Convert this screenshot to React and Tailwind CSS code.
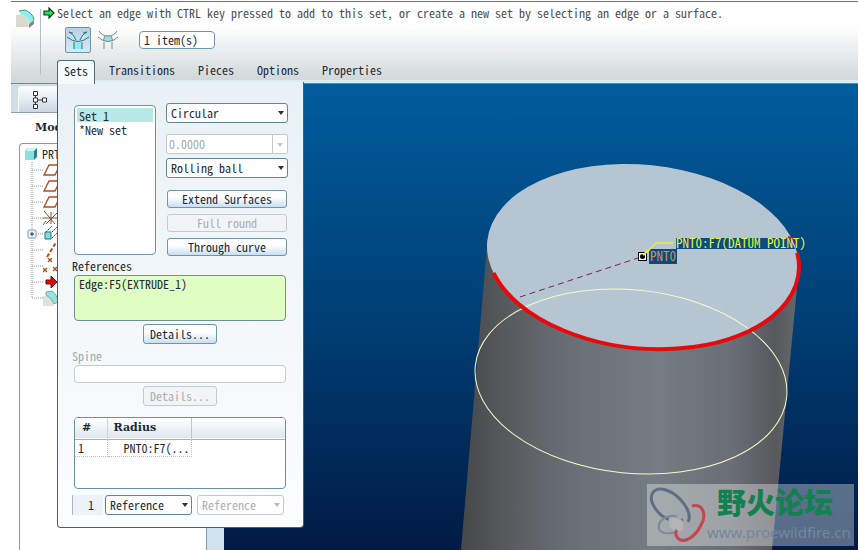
import React, { useState } from "react";

const TABS = ["Transitions", "Pieces", "Options", "Properties"];

const INK = "#1e2a33";

function RoundIcon({ className }) {
  return (
    <svg viewBox="0 0 20 20" className={className} aria-hidden="true">
      <path d="M1 6 L7 5 Q13 8 14 18 H1 Z" fill="#dad9d0" />
      <path d="M4 2 L10 1 Q18 4 19 11 L14 15 Q13 8 6 5 Z" fill="#8df0ea" />
      <path d="M4 2 L10 1 Q18 4 19 11" fill="none" stroke="#5c8288" strokeWidth="1" />
      <path d="M14 15 L19 11 V15 L14 19 Z" fill="#85877f" />
    </svg>
  );
}

function PromptArrow() {
  return (
    <svg viewBox="0 0 12 12" className="h-3 w-3 shrink-0" aria-hidden="true">
      <path d="M1 4 H6 V1 L11 6 L6 11 V8 H1 Z" fill="#1fe060" stroke="#0b3d1a" strokeWidth="1.2" />
    </svg>
  );
}

function SetModeIcon() {
  return (
    <svg viewBox="0 0 24 24" className="h-6 w-6 shrink-0" fill="none" aria-hidden="true">
      <path d="M8 14 Q12 15 16 14 V21 H8 Z" fill="#86eef2" />
      <path d="M2 9 L7 5 Q10 8 10 12 Q5 11 2 9 Z M22 9 L17 5 Q14 8 14 12 Q19 11 22 9 Z" fill="#a8f0f2" />
      <path d="M1 9 Q12 18 23 9 M3 4 Q8 6 10 12 M21 4 Q16 6 14 12 M8 14 V21 M16 14 V21" stroke="#4a6877" />
      <path d="M3 4 L7 5 M21 4 L17 5" stroke="#4a6877" />
    </svg>
  );
}

function TransitionModeIcon() {
  return (
    <svg viewBox="0 0 24 24" className="h-6 w-6 shrink-0" fill="none" aria-hidden="true">
      <path d="M9 8 Q12 6 15 8 L17 13 Q12 15 7 13 Z" fill="#8fe4e2" />
      <path d="M2 9 Q12 18 22 9 M3 3 Q6 8 12 8 Q18 8 21 3 M9 8 L7 13 M15 8 L17 13 M8 14 V21 M16 14 V21" stroke="#7f8b91" />
    </svg>
  );
}

function Header({ tab, setTab, children }) {
  return (
    <header className="relative z-10 flex h-[82px] border-b border-[#5f8ba3] bg-linear-to-b from-white from-30% to-[#d2d9da] to-95%">
      <div className="flex w-[30px] shrink-0 pt-[7px] pb-2">
        <div className="flex-1 border-r border-[#b4c0c6] pl-1">
          <RoundIcon className="h-5 w-5" />
        </div>
      </div>
      <div className="flex min-w-0 flex-1 flex-col justify-between">
        <p className="flex items-center gap-[2px] pt-1 pl-[2px] leading-[14px] whitespace-nowrap text-[#4a4f55]">
          <PromptArrow />
          Select an edge with CTRL key pressed to add to this set, or create a new set by selecting an edge or a surface.
        </p>
        <div className="flex items-center pl-6">
          <button type="button" aria-label="Set mode" className="flex h-[26px] w-[26px] items-center justify-center rounded-[2px] border border-[#6f93aa] bg-linear-to-b from-[#b4d2e6] to-[#d4e9f6]">
            <SetModeIcon />
          </button>
          <button type="button" aria-label="Transition mode" className="ml-1 flex h-[26px] w-[26px] items-center justify-center">
            <TransitionModeIcon />
          </button>
          <input
            aria-label="Collector"
            readOnly
            value="1 item(s)"
            className="ml-[18px] h-[18px] w-[76px] rounded-[4px] border border-[#7395a8] bg-white px-1"
          />
        </div>
        <nav className="flex h-[23px] pl-4">
          <button
            type="button"
            onClick={() => setTab("Sets")}
            className="relative z-20 h-6 w-[38px] rounded-t-[3px] border border-b-0 border-[#4f6b7b] bg-[#f7fafc] pb-1 leading-[18px]"
          >
            Sets
          </button>
          <div className="flex flex-1 gap-[23px] border-b-3 border-[#dcecf5] pl-[14px]">
            {TABS.map((name) => (
              <button key={name} type="button" onClick={() => setTab(name)}>
                {name}
              </button>
            ))}
          </div>
        </nav>
      </div>
      {tab === "Sets" && children}
    </header>
  );
}

function Caret({ className }) {
  return (
    <svg viewBox="0 0 6 4" className={`pointer-events-none absolute top-2 right-1 h-1 w-[6px] ${className}`} aria-hidden="true">
      <path d="M0 0 H6 L3 4 Z" fill="currentColor" />
    </svg>
  );
}

function Dropdown({ label, options, disabled, className }) {
  return (
    <div className={`relative ${className || ""}`}>
      <select
        aria-label={label}
        disabled={disabled}
        className="h-5 w-full appearance-none rounded-[3px] border border-[#5f8799] bg-white px-1 leading-4 disabled:border-[#c3cacd] disabled:text-[#aab0b3] disabled:opacity-100"
      >
        {options.map((o) => (
          <option key={o}>{o}</option>
        ))}
      </select>
      <Caret className={disabled ? "text-[#b5babd]" : "text-[#2a3137]"} />
    </div>
  );
}

function PanelButton({ children, disabled, className }) {
  return (
    <button
      type="button"
      disabled={disabled}
      className={`rounded-[3px] border border-[#6f95ab] bg-linear-to-b from-white from-40% to-[#c6e0f3] disabled:border-[#c3cbcf] disabled:from-[#f1f5f7] disabled:to-[#f1f5f7] disabled:text-[#a9afb2] ${className}`}
    >
      {children}
    </button>
  );
}

function SetsPanel() {
  return (
    <section
      aria-label="Sets"
      className="absolute top-20 left-[46px] w-[247px] rounded-b-[4px] border border-t-0 border-[#47616f] bg-linear-to-b from-[#eaf1f6] to-[#fbfdfe] pt-[21px] pb-3 pl-4"
    >
      <div className="flex gap-[10px]">
        <select
          size={9}
          aria-label="Round sets"
          defaultValue="Set 1"
          className="mt-[2px] h-[150px] w-[82px] overflow-hidden rounded-[4px] border border-[#6d95a4] bg-white p-[2px] leading-3"
        >
          <option className="flex h-[14px] min-h-0 items-center px-[2px] py-0 leading-3 checked:bg-[linear-gradient(#b9e9e7,#b9e9e7)] checked:text-[#1e2a33]">Set 1</option>
          <option className="flex h-[14px] min-h-0 items-center px-[2px] py-0 leading-3">*New set</option>
        </select>
        <div className="flex w-[122px] flex-col">
          <Dropdown label="Cross section" options={["Circular", "Conic"]} />
          <div className="relative mt-[11px] flex h-5 rounded-[2px] border border-[#c3cacd] bg-white">
            <input aria-label="Conic parameter" disabled defaultValue="0.0000" className="w-[106px] border-r border-[#c3cacd] px-[2px] text-[#a3a9ac]" />
            <Caret className="text-[#c5c9cb]" />
          </div>
          <Dropdown label="Creation method" options={["Rolling ball", "Normal to spine"]} className="mt-1" />
          <div className="mt-3 flex flex-col gap-[6px] px-px">
            <PanelButton className="h-[18px] leading-4">Extend Surfaces</PanelButton>
            <PanelButton disabled className="h-[18px] leading-4">Full round</PanelButton>
            <PanelButton className="h-[18px] leading-4">Through curve</PanelButton>
          </div>
        </div>
      </div>

      <div className="mt-1 flex w-[212px] flex-col">
        <label htmlFor="references" className="-ml-[2px] pb-[3px] leading-3">References</label>
        <textarea
          id="references"
          readOnly
          value="Edge:F5(EXTRUDE_1)"
          className="h-[46px] resize-none rounded-[4px] border border-[#6f9290] bg-[#e0fdc3] px-1 py-px leading-[14px]"
        />
        <PanelButton className="mt-[3px] h-5 w-[74px] self-center leading-4">Details...</PanelButton>
        <label htmlFor="spine" className="mt-[6px] -ml-[2px] pb-[3px] leading-3 text-[#a3a9ac]">Spine</label>
        <input id="spine" disabled className="h-[18px] rounded-[4px] border border-[#c3cbcf] bg-white px-1" />
        <PanelButton disabled className="mt-[3px] h-5 w-[74px] self-center leading-4">Details...</PanelButton>

        <div className="mt-[11px] h-[72px] overflow-hidden rounded-[4px] border border-[#6d909f] bg-white">
          <table className="w-full table-fixed border-collapse text-left">
            <thead>
              <tr className="h-[21px] border-b border-[#9fb2bf] bg-linear-to-b from-white to-[#dfe7ef] font-['DejaVu_Serif',serif] text-[11px]">
                <th className="w-8 border-r border-[#cbd5dc] pl-[7px]">#</th>
                <th className="w-[84px] border-r border-[#b9c8d2] pl-[6px]">Radius</th>
                <th aria-label="Value" />
              </tr>
            </thead>
            <tbody>
              <tr className="h-[17px]">
                <td className="border-r border-b border-dotted border-[#b9c3ca] pl-[3px] leading-4">1</td>
                <td className="border-r border-b border-dotted border-[#b9c3ca] pl-4 leading-4 whitespace-nowrap">PNT0:F7(...</td>
                <td />
              </tr>
            </tbody>
          </table>
        </div>

        <div className="mt-[6px] -ml-[2px] flex">
          <span className="mr-[2px] w-[31px] border-l border-[#a9b8c1] bg-[#edf2f6] pr-[9px] text-right leading-5">1</span>
          <Dropdown label="Radius type" options={["Reference", "Value"]} className="w-[87px]" />
          <Dropdown label="Second radius type" options={["Reference", "Value"]} disabled className="ml-[5px] w-[87px]" />
        </div>
      </div>
    </section>
  );
}

const brown = "#a5532a";

const TREE = [
  { name: "RIGHT", icon: <path d="M6 3 H17 L12 13 H1 Z" fill="none" stroke={brown} strokeWidth="1.4" /> },
  { name: "TOP", icon: <path d="M6 3 H17 L12 13 H1 Z" fill="none" stroke={brown} strokeWidth="1.4" /> },
  { name: "FRONT", icon: <path d="M6 3 H17 L12 13 H1 Z" fill="none" stroke={brown} strokeWidth="1.4" /> },
  { name: "PRT_CSYS_DEF", icon: <path d="M0 8 H16 M3 14 L14 3 M1 1 L12 14 M8 2 V14 M0 15 L3 11" fill="none" stroke="#80503a" /> },
  {
    name: "Extrude 1",
    plus: true,
    icon: (
      <>
        <path d="M9 6 L14 1 M9 12 L15 6 M3 6 L9 0" stroke="#444" strokeDasharray="2 1" />
        <path d="M2 6 H8 V13 H2 Z" fill="#7fe0e0" stroke="#2b6d72" />
      </>
    ),
  },
  { name: "A_1", icon: <path d="M4 15 L14 -1" stroke={brown} strokeWidth="2" strokeDasharray="4 2" /> },
  { name: "PNT0", icon: <path d="M0 10 L4 14 M4 10 L0 14 M5 0 L9 4 M9 0 L5 4 M10 9 L14 13 M14 9 L10 13" stroke={brown} strokeWidth="1.4" /> },
  { name: "Insert Here", icon: <path d="M3 6 H8 V2 L14 8 L8 14 V10 H3 Z" fill="#d90d0d" stroke="#7a0505" /> },
  {
    name: "Round 1",
    icon: (
      <>
        <path d="M0 6 H5 Q10 8 11 16 H0 Z" fill="#e3e2da" />
        <path d="M3 2 L9 1 Q14 4 15 12 L11 14 Q9 8 3 5 Z" fill="#8fe6e0" stroke="#7fa9aa" />
      </>
    ),
  },
];

function ModelTree() {
  return (
    <aside className="flex w-[213px] shrink-0 flex-col overflow-hidden">
      <div className="flex h-[29px] shrink-0 items-end border-b border-[#8ea0ad] bg-[#d3dde6] pl-[7px]">
        <button type="button" aria-label="Model tree" className="flex h-[26px] w-[52px] items-center rounded-t-[4px] border border-b-0 border-[#f4f8fb] bg-linear-to-b from-[#fbfdfe] to-[#cbd8e3] pl-[13px]">
          <svg viewBox="0 0 16 20" className="h-5 w-4 shrink-0" fill="#fff" stroke="#30363b" aria-hidden="true">
            <path d="M3.5 5 V15 M5 10 H11" />
            <path d="M1.5 1.5 H5.5 V5.5 H1.5 Z M1.5 8 H5.5 V12 H1.5 Z M1.5 14.5 H5.5 V18.5 H1.5 Z M10.5 8 H14.5 V12 H10.5 Z" />
          </svg>
        </button>
      </div>
      <h2 className="py-2 pl-6 font-['DejaVu_Serif',serif] text-[11px] leading-[14px] font-bold">Model Tree</h2>
      <div className="flex min-h-0 flex-1">
        <div className="ml-2 flex-1 rounded-tl-[4px] border border-b-0 border-[#7f9dac] bg-white pt-[2px] pl-1">
          <div className="flex h-4 items-center gap-1">
            <svg viewBox="0 0 14 14" className="h-[14px] w-[14px]" aria-hidden="true">
              <path d="M1 4 L4 1 H13 V10 L10 13 H1 Z" fill="#2f7f85" />
              <path d="M1 4 H10 V13 H1 Z" fill="#86e2df" />
              <path d="M1 4 L4 1 H13 L10 4 Z" fill="#c9f7f5" />
            </svg>
            PRT
          </div>
          <ul className="pl-2">
            {TREE.map((item, i) => (
              <li key={item.name} aria-label={item.name} className="flex h-4 items-center">
                <svg viewBox="0 0 11 16" className="h-4 w-[11px] overflow-visible" fill="none" aria-hidden="true">
                  <path d={i === TREE.length - 1 ? "M0 0 V8 H11" : "M0 0 V16 M0 8 H11"} stroke="#8d9498" strokeDasharray="1 1" />
                  {item.plus && (
                    <>
                      <rect x="-4" y="4" width="8" height="8" rx="1" fill="#eaf1f6" stroke="#8aa0b0" />
                      <path d="M-2 8 H2 M0 6 V10" stroke="#1f3a5a" />
                    </>
                  )}
                </svg>
                <svg viewBox="0 0 16 16" className="h-4 w-4" aria-hidden="true">{item.icon}</svg>
              </li>
            ))}
          </ul>
        </div>
        <div className="w-[17px] bg-[#d0e0ec]" />
      </div>
    </aside>
  );
}

function Viewport() {
  return (
    <main className="relative min-w-0 flex-1 overflow-hidden bg-linear-to-b from-[#005c9d] via-[#003f75] to-[#001b45]">
      <svg viewBox="224 84 634 466" preserveAspectRatio="xMidYMin slice" className="absolute inset-0 h-full w-full" role="img" aria-label="Cylinder with edge selected">
        <defs>
          <linearGradient id="side" x1="0" x2="1">
            <stop offset="0" stopColor="#454849" />
            <stop offset="0.12" stopColor="#55595c" />
            <stop offset="0.3" stopColor="#686d74" />
            <stop offset="0.58" stopColor="#737d83" />
            <stop offset="0.8" stopColor="#6a6e76" />
            <stop offset="0.93" stopColor="#58595d" />
            <stop offset="1" stopColor="#64696a" />
          </linearGradient>
        </defs>
        <path d="M487 246 L461 550 H772 L799 266 Z" fill="url(#side)" />
        <ellipse cx="643" cy="256.5" rx="156.5" ry="91.6" transform="rotate(5.73 643 256.5)" fill="#b5c5d1" />
        <ellipse cx="631" cy="381.5" rx="156.5" ry="91.6" transform="rotate(5.73 631 381.5)" fill="none" stroke="#f4fbc8" />
        <path d="M493.5 273 A156.5 91.6 5.73 0 0 797.2 252.8" fill="none" stroke="#e8090c" strokeWidth="4" />
        <path d="M520 297 L638 258" stroke="#7c1f4c" strokeDasharray="6 4" />
        <rect x="649" y="249" width="28" height="15" fill="#0a4c80" />
        <path d="M676 238 H790 L795 249 H676 Z" fill="#0a4c80" />
        <path d="M788 237 L796 240" stroke="#e8090c" strokeWidth="2" />
        <path d="M644 255 L656 243 H673" fill="none" stroke="#eaf02c" strokeWidth="1.5" />
        <rect x="638.5" y="252.5" width="8" height="8" fill="#fff" stroke="#000" />
        <circle cx="642.5" cy="256.5" r="2.5" fill="#000" />
        <path d="M643 255 L649 250" stroke="#eaf02c" strokeWidth="2" />
        <text x="650" y="261" fill="#d0924e" className="text-[13px]">PNT0</text>
        <text x="676" y="248" fill="#e6f53c" className="text-[13px]">PNT0:F7(DATUM POINT)</text>
      </svg>

      <div className="absolute right-1 bottom-1 flex h-[62px] w-[207px] bg-white/35">
        <svg viewBox="0 0 60 62" className="h-[62px] w-[60px] shrink-0" fill="none" aria-hidden="true">
          <path d="M41 38 C46 29 34 11 19 6 C6 2 0 12 8 24 C14 34 26 39 36 36" stroke="#5d6e83" strokeWidth="3" />
          <path d="M30 33 C22 29 10 36 12 45 C14 50 22 50 29 48" stroke="#7d8a98" strokeWidth="2" />
          <path d="M22 35 C30 30 40 38 36 45 C32 50 24 47 22 42 Z" fill="#b4b4b8" stroke="#a3a6aa" />
          <path d="M45 22 C56 19 60 31 54 41 C48 54 35 61 30 53 C28 50 29 47 30 46" stroke="#c4474f" strokeWidth="3" />
        </svg>
        <div className="flex flex-col">
          <p className="pl-[10px] font-['Noto_Sans_CJK_SC',sans-serif] text-[29px] leading-[34px] font-black text-[#14804f]">野火论坛</p>
          <p className="mt-1 font-['Noto_Sans',sans-serif] text-[15px] leading-5 text-[#7187a3]">www.proewildfire.cn</p>
        </div>
      </div>
    </main>
  );
}

export default function App() {
  const [tab, setTab] = useState("Sets");

  return (
    <div
      className="flex min-h-screen flex-col bg-white pl-[11px] font-['Noto_Sans_Mono_CJK_SC','Liberation_Mono',monospace] text-[12px]"
      style={{ color: INK }}
    >
      <div className="h-[2px] border-b border-[#4a7e9a]" />
      <Header tab={tab} setTab={setTab}>
        <SetsPanel />
      </Header>
      <div className="flex min-h-[466px] flex-1">
        <ModelTree />
        <Viewport />
      </div>
    </div>
  );
}
